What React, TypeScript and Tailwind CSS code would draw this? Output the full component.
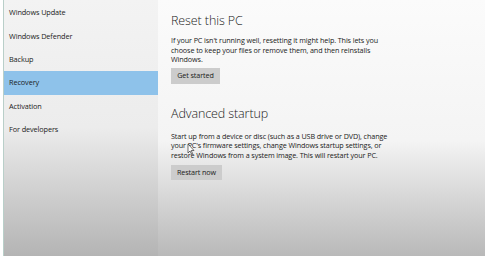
export default function App() {
  const items = ["Windows Update", "Windows Defender", "Backup", "Recovery", "Activation", "For developers"];

  return (
    <div
      className="w-[491px] h-[256px] flex bg-white overflow-hidden text-[#1a1a1a]"
      style={{ fontFamily: '"Open Sans", "Noto Sans", sans-serif' }}
    >
      <div className="w-[4px] bg-white border-r border-[#b9cfc9]" />
      {/* sidebar */}
      <div className="w-[154px] flex flex-col pt-[1px] bg-gradient-to-b from-[#f3f3f3] via-[#ececec] to-[#b4b4b4]">
        {items.map((t) => (
          <div
            key={t}
            className={
              "h-[23.4px] flex items-center pl-[5px] text-[7.3px] tracking-[-0.1px] " +
              (t === "Recovery" ? "bg-[#8ec2ea]" : "")
            }
          >
            {t}
          </div>
        ))}
      </div>
      {/* main */}
      <div className="w-[327px] flex flex-col pl-[13px] pt-[11px] bg-gradient-to-b from-[#fbfbfb] via-[#f4f4f4] via-55% to-[#b9b9b9]">
        <h2 className="text-[12.5px] font-light leading-[20px] tracking-[-0.1px]">Reset this PC</h2>
        <p className="mt-[5px] text-[7.2px] leading-[9.6px] w-[220px] tracking-[-0.1px]">
          If your PC isn't running well, resetting it might help. This lets you choose to keep your files or remove them, and then reinstalls Windows.
        </p>
        <button className="mt-[3px] w-[49px] h-[16px] bg-[#cccccc] text-[7.2px] tracking-[-0.1px] flex items-center justify-center">
          Get started
        </button>
        <h2 className="mt-[20px] text-[12.5px] font-light leading-[20px] tracking-[-0.1px]">Advanced startup</h2>
        <p className="mt-[8px] text-[7.2px] leading-[9.6px] w-[220px] tracking-[-0.1px] relative">
          Start up from a device or disc (such as a USB drive or DVD), change your PC's firmware settings, change Windows startup settings, or restore Windows from a system image. This will restart your PC.
          {/* mouse pointer */}
          <svg className="absolute left-[16px] top-[11px]" width="8" height="12" viewBox="0 0 8 12">
            <path d="M1 1 L1 10 L3 8 L4.5 11 L5.6 10.5 L4.2 7.5 L7 7.5 Z" fill="#fff" stroke="#333" strokeWidth="0.7" />
          </svg>
        </p>
        <button className="mt-[4px] w-[51px] h-[15px] bg-[#cccccc] text-[7.2px] tracking-[-0.1px] flex items-center justify-center">
          Restart now
        </button>
      </div>
      <div className="flex-1 bg-white" />
    </div>
  );
}
